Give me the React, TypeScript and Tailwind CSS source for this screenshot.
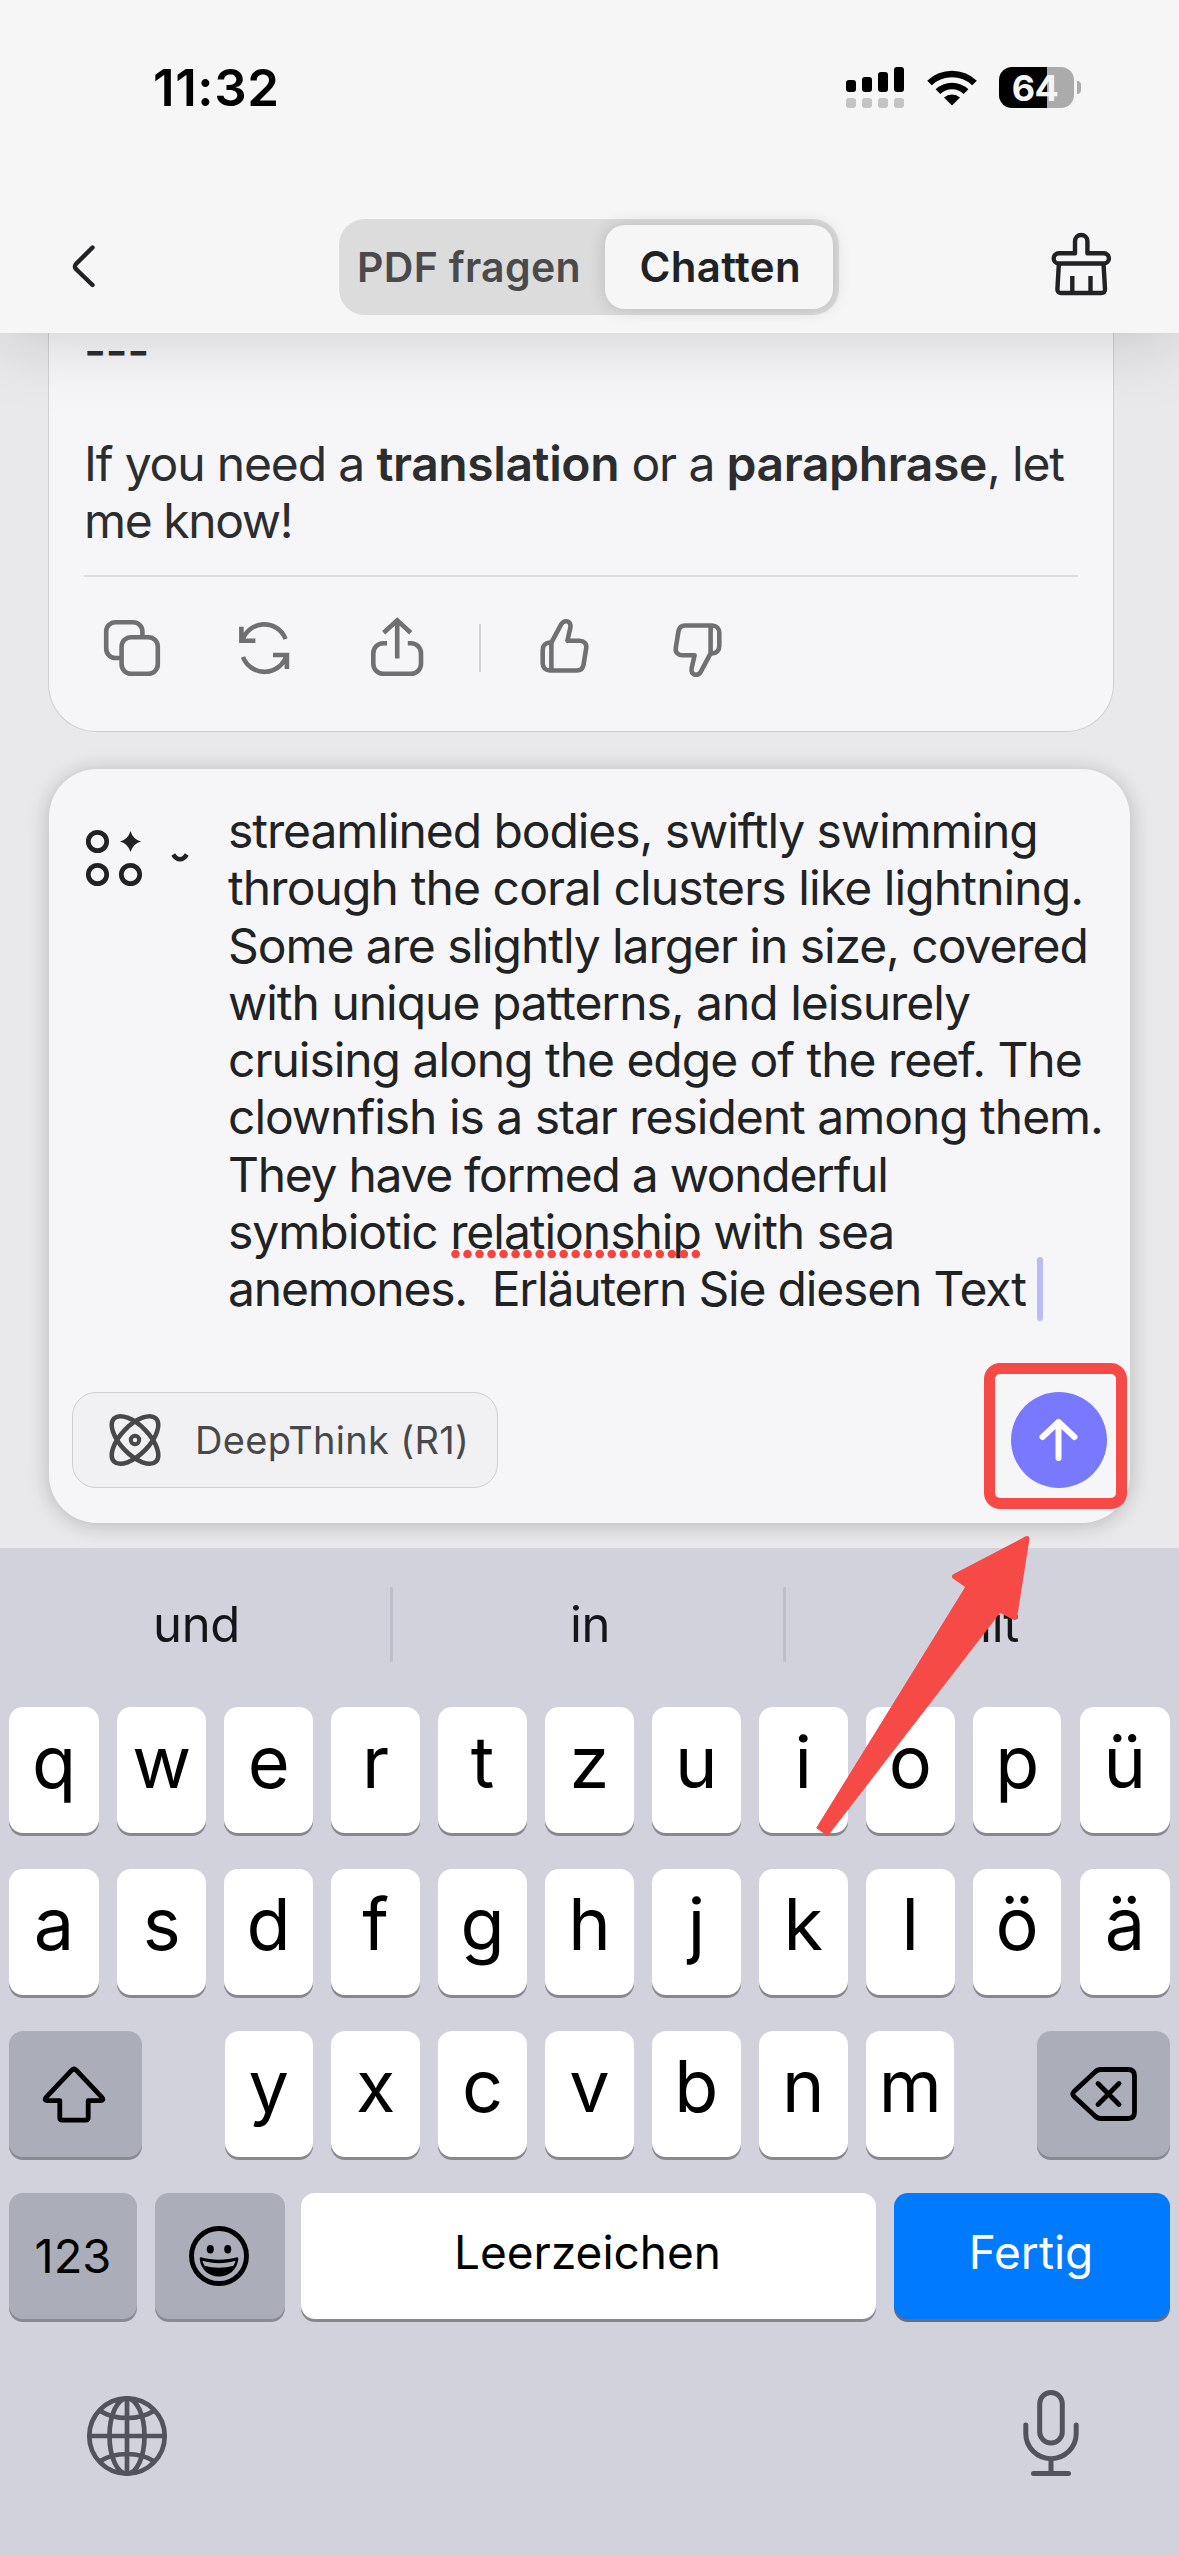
import type { ReactNode } from "react";

const DRAFT_LINES = [
  { text: "streamlined bodies, swiftly swimming", tracking: "tracking-[-1.07px]" },
  { text: "through the coral clusters like lightning.", tracking: "tracking-[-0.9px]" },
  { text: "Some are slightly larger in size, covered", tracking: "tracking-[-1.07px]" },
  { text: "with unique patterns, and leisurely", tracking: "tracking-[-1.02px]" },
  { text: "cruising along the edge of the reef. The", tracking: "tracking-[-1.03px]" },
  { text: "clownfish is a star resident among them.", tracking: "tracking-[-1.03px]" },
  { text: "They have formed a wonderful", tracking: "tracking-[-1.3px]" },
];

const ROW_ONE = ["q", "w", "e", "r", "t", "z", "u", "i", "o", "p", "ü"];
const ROW_TWO = ["a", "s", "d", "f", "g", "h", "j", "k", "l", "ö", "ä"];
const ROW_THREE = ["y", "x", "c", "v", "b", "n", "m"];

function StatusBar() {
  return (
    <div className="flex h-[174px] items-start pl-[153px] pt-[57px] text-black">
      <span className="w-[693px] text-[51px] leading-[62px] font-semibold tracking-[0.6px]">11:32</span>
      <svg className="mt-[10px]" width="58" height="41" viewBox="0 0 58 41">
        <rect x="0" y="13" width="10" height="12" rx="3" />
        <rect x="16" y="10" width="10" height="15" rx="3" />
        <rect x="32" y="5" width="10" height="20" rx="3" />
        <rect x="48" y="0" width="10" height="25" rx="3" />
        <g fill="#c4c4c4">
          <rect x="0" y="31" width="10" height="10" rx="3" />
          <rect x="16" y="31" width="10" height="10" rx="3" />
          <rect x="32" y="31" width="10" height="10" rx="3" />
          <rect x="48" y="31" width="10" height="10" rx="3" />
        </g>
      </svg>
      <svg className="mt-[11px] ml-[22px]" width="52" height="39" viewBox="0 0 52 39">
        <path d="M1.2 12.7a36 36 0 0 1 49.6 0l-4.6 4.5a29.5 29.5 0 0 0-40.4 0z" />
        <path d="M9.6 21.2a24 24 0 0 1 32.8 0l-4.7 4.7a17 17 0 0 0-23.4 0z" />
        <path d="M18 29.6a12 12 0 0 1 16 0L26 37.6z" />
      </svg>
      <div className="mt-[10px] ml-[21px] flex items-center gap-[3px]">
        <div className="flex h-[41px] w-[75px] items-center justify-center rounded-[13px] bg-linear-to-r from-black from-64% to-[#ababab] to-64% text-[36px] leading-none font-bold tracking-[-0.5px] text-[#f5f5f5]">
          <span className="-ml-[3px]">64</span>
        </div>
        <div className="h-[13px] w-[4px] rounded-r-full bg-[#ababab]" />
      </div>
    </div>
  );
}

function Header() {
  return (
    <header className="relative z-10 h-[333px] shrink-0 bg-[#f6f6f6] shadow-[0_4px_70px_rgba(0,0,0,0.17)]">
      <StatusBar />
      <div className="flex h-[159px] items-start pt-[45px]">
        <svg className="mt-[24px] ml-[70px]" width="28" height="48" viewBox="0 0 28 48" fill="none" stroke="#212224" strokeWidth="4.4" strokeLinecap="round" strokeLinejoin="round">
          <path d="M22.5 4.5L6.2 20.8q-2.7 2.7 0 5.4L22.5 42" />
        </svg>
        <div className="ml-[241px] flex h-[96px] w-[500px] rounded-[26px] bg-[#dcdcdc] p-[6px]">
          <div className="flex w-[261px] items-center pl-[12px] text-[41px] leading-[50px] font-semibold tracking-[0.3px] whitespace-nowrap text-[#4a4a4c]">
            PDF fragen
          </div>
          <div className="flex h-[84px] w-[228px] items-center justify-center rounded-[20px] bg-[#f6f6f6] pl-[2px] text-[42px] leading-[50px] font-semibold tracking-[0.3px] text-[#212224] shadow-[0_0_18px_rgba(0,0,0,0.16)]">
            Chatten
          </div>
        </div>
        <svg className="mt-[12px] ml-[211px]" width="64" height="68" viewBox="0 0 64 68" fill="none" stroke="#212224" strokeWidth="4.4" strokeLinejoin="round">
          <path d="M25 22.3V10.2a6.2 6.2 0 0 1 12.4 0v12.1h16.4a5 5 0 0 1 0 10.2H8.8a5 5 0 0 1 0-10.2z" />
          <path d="M8.9 32.5L7.4 58q-.3 4 3.8 4h40q4.1 0 3.8-4l-1.5-25.5" />
          <path d="M22.3 45v17M40.5 45v17" />
        </svg>
      </div>
    </header>
  );
}

const THUMB =
  "M14.4 26.6L24 8.7C25.5 5.8 27.4 5.2 29 5.2c3.5 0 5.2 3 4.3 6.8L30.4 24.7H42.5c4.5 0 7.4 3 6.7 7.4L46.6 48.3c-.6 3.9-2.9 6.2-6.8 6.2H13c-4.5 0-7.3-2.9-7.3-7.3V34c0-4.5 2.8-7.4 7.3-7.4zM14.4 26.6v27.9";

function Answer() {
  return (
    <section className="ml-[48px] flow-root h-[399px] w-[1066px] rounded-b-[48px] border border-t-0 border-[#cfcfd1] bg-[#f6f6f8] pl-[35px]">
      <div className="-mt-[13px] text-[48px] leading-[57.3px] whitespace-nowrap text-[#2c2d2f]">
        <p className="translate-y-[2px] font-medium tracking-[-0.6px]">---</p>
        <p>&nbsp;</p>
        <p className="tracking-[-1.15px]">
          If you need a <b className="font-semibold tracking-[-0.4px]">translation</b> or a{" "}
          <b className="font-semibold tracking-[-0.4px]">paraphrase</b>, let
        </p>
        <p className="tracking-[-1.4px]">me know!</p>
      </div>
      <div className="mt-[26px] h-[2px] w-[994px] bg-[#dcdcde]" />
      <div className="mt-[39px] flex items-start pl-[18px]">
        <svg width="60" height="62" viewBox="0 0 60 62" fill="none" stroke="#707072" strokeWidth="4.6">
          <rect x="19.6" y="21.2" width="36.2" height="36.6" rx="9.5" />
          <path d="M40.4 20V15.5a9.3 9.3 0 0 0-9.3-9.3H13.5a9.3 9.3 0 0 0-9.3 9.3V32.7A9.3 9.3 0 0 0 13.5 42H18" />
        </svg>
        <svg className="ml-[74px]" width="56" height="62" viewBox="0 0 56 62" fill="none" stroke="#707072" strokeWidth="4.6">
          <path d="M49.6 23A23 23 0 0 0 6 25.3M5.4 10.7v14h14" />
          <path d="M7 41A23 23 0 0 0 50.6 39.2M50.9 53V39H37" />
        </svg>
        <svg className="ml-[76px]" width="58" height="62" viewBox="0 0 58 62" fill="none" stroke="#707072" strokeWidth="4.6">
          <path d="M19 27.2H15.3a10 10 0 0 0-10 10V47.8a10 10 0 0 0 10 10H43a10 10 0 0 0 10-10V37.2a10 10 0 0 0-10-10H39.8" />
          <path d="M29.2 42.5V5M15.7 16.8L29.2 4.3L42.7 16.8" />
        </svg>
        <div className="mt-[8px] ml-[53px] h-[48px] w-[2px] bg-[#d2d2d4]" />
        <svg className="ml-[56px]" width="54" height="61" viewBox="0 0 54 61" fill="none" stroke="#707072" strokeWidth="4.6" strokeLinejoin="round">
          <path d={THUMB} />
        </svg>
        <svg className="mt-[3px] ml-[80px] rotate-180" width="54" height="61" viewBox="0 0 54 61" fill="none" stroke="#707072" strokeWidth="4.6" strokeLinejoin="round">
          <path d={THUMB} />
        </svg>
      </div>
    </section>
  );
}

function Composer() {
  return (
    <section className="mt-[37px] ml-[49px] flex h-[754px] w-[1081px] flex-col rounded-[48px] bg-[#f6f6f8] shadow-[0_2px_22px_rgba(0,0,0,0.22)]">
      <div className="flex h-[623px] pt-[32px]">
        <svg className="mt-[27px] ml-[35px]" width="66" height="62" viewBox="0 0 66 62">
          <g fill="none" stroke="#212224" strokeWidth="4.7">
            <circle cx="13.5" cy="13.5" r="9.2" />
            <circle cx="13.5" cy="46.5" r="9.2" />
            <circle cx="46.5" cy="46.5" r="9.2" />
          </g>
          <path fill="#212224" d="M46.5 3Q48.8 11.2 57 13.5Q48.8 15.8 46.5 24Q44.2 15.8 36 13.5Q44.2 11.2 46.5 3z" />
        </svg>
        <svg className="mt-[48px] ml-[21px]" width="20" height="18" viewBox="0 0 20 18" fill="none" stroke="#212224" strokeWidth="4.4">
          <path d="M2.2 5.5Q5 10.2 9 10.2T15.8 5.5" />
        </svg>
        <div className="mt-px ml-[37px] text-[48px] leading-[57.3px] whitespace-pre text-[#212224]">
          {DRAFT_LINES.map((line) => (
            <p key={line.text} className={line.tracking}>
              {line.text}
            </p>
          ))}
          <p className="tracking-[-1.03px]">
            symbiotic{" "}
            <span className="relative">
              relationship
              <svg className="absolute top-[47px] left-0" width="252" height="10" viewBox="0 0 252 10">
                <path d="M5.5 5H248" stroke="#f7443e" strokeWidth="8.6" strokeLinecap="round" strokeDasharray="0 12.02" />
              </svg>
            </span>{" "}
            with sea
          </p>
          <p className="flex items-center tracking-[-1.18px]">
            anemones.{"  "}Erläutern Sie diesen Text
            <span className="-my-[4px] ml-[11px] h-[64px] w-[6px] shrink-0 rounded-full bg-[#b9bcf6]" />
          </p>
        </div>
      </div>
      <div className="flex items-center justify-between pr-[23px] pl-[23px]">
        <button type="button" className="flex h-[96px] w-[426px] items-center rounded-[24px] border border-[#cfcfd1] bg-[#f1f1f3] pl-[35px] text-[38px] tracking-[0.3px] whitespace-nowrap text-[#48484a]">
          <svg className="mr-[33px] shrink-0" width="54" height="54" viewBox="0 0 54 54" fill="none" stroke="#48484a" strokeWidth="4.5">
            <ellipse cx="27" cy="27" rx="30" ry="14.3" transform="rotate(46 27 27)" />
            <ellipse cx="27" cy="27" rx="30" ry="14.3" transform="rotate(-46 27 27)" />
            <circle cx="27" cy="27" r="4.2" strokeWidth="4" />
          </svg>
          DeepThink (R1)
        </button>
        <button type="button" className="flex size-[96px] items-center justify-center rounded-full bg-[#7879ff]">
          <svg width="46" height="46" viewBox="0 0 46 46" fill="none" stroke="#fff" strokeWidth="6" strokeLinecap="round" strokeLinejoin="round">
            <path d="M22.5 41V5M6.5 20L22.5 5L38.5 20" />
          </svg>
        </button>
      </div>
    </section>
  );
}

function LetterKey({ label }: { label: string }) {
  return (
    <div className="flex h-[126px] w-[88.5px] items-center justify-center rounded-[14px] bg-white pb-[16px] text-[72px] leading-none text-black shadow-[0_3px_0_#88898e]">
      {label}
    </div>
  );
}

function LetterRow({ letters }: { letters: string[] }) {
  return (
    <div className="flex justify-between [&>:first-child]:w-[90px] [&>:last-child]:w-[90px]">
      {letters.map((k) => (
        <LetterKey key={k} label={k} />
      ))}
    </div>
  );
}

function GreyKey({ children, className }: { children: ReactNode; className: string }) {
  return (
    <div className={`flex h-[126px] shrink-0 items-center justify-center rounded-[14px] bg-[#abadb9] shadow-[0_3px_0_#898a92] ${className}`}>
      {children}
    </div>
  );
}

function Keyboard() {
  return (
    <section className="h-[1008px] shrink-0 bg-[#d1d2dc] text-black">
      <div className="mb-[6px] flex h-[153px] items-center text-[49px] tracking-[-0.3px] text-[#141518]">
        <span className="w-[390px] pl-[3px] text-center">und</span>
        <span className="h-[75px] w-[3px] rounded-full bg-[#bdbeca]" />
        <span className="w-[390px] pl-[4px] text-center">in</span>
        <span className="h-[75px] w-[3px] rounded-full bg-[#bdbeca]" />
        <span className="w-[393px] pl-[3px] text-center">mit</span>
      </div>

      <div className="flex flex-col gap-[36px] px-[9px]">
        <LetterRow letters={ROW_ONE} />
        <LetterRow letters={ROW_TWO} />
        <div className="flex justify-between">
          <GreyKey className="w-[133px]">
            <svg className="-ml-[3px]" width="66" height="58" viewBox="0 0 66 58" fill="none" stroke="#000" strokeWidth="4.8" strokeLinejoin="round">
              <path d="M30.8 5.2L4.8 32.7q-1.7 2.8 1.3 3H18.8V52.5q0 2.6 2.6 2.6H44.6q2.6 0 2.6-2.6V35.7H59.9q3-.2 1.3-3L35.2 5.2q-2.2-2.1-4.4 0z" />
            </svg>
          </GreyKey>
          <div className="flex gap-[18.4px]">
            {ROW_THREE.map((k) => (
              <LetterKey key={k} label={k} />
            ))}
          </div>
          <GreyKey className="w-[133px]">
            <svg width="68" height="58" viewBox="0 0 68 58" fill="none" stroke="#000" strokeWidth="4.8" strokeLinejoin="round" strokeLinecap="round">
              <path d="M31 4.5H58q6.5 0 6.5 6.5V47q0 6.5-6.5 6.5H31q-3.5 0-6-2.5L4 31.5q-2.3-2.5 0-5L25 7q2.5-2.5 6-2.5z" />
              <path d="M28 18.5L49 39.5M49 18.5L28 39.5" />
            </svg>
          </GreyKey>
        </div>
        <div className="flex text-[46px]">
          <GreyKey className="w-[128px] text-[47px]">123</GreyKey>
          <GreyKey className="ml-[18px] w-[130px]">
            <svg className="-ml-[2px]" width="60" height="60" viewBox="0 0 60 60">
              <circle cx="30" cy="30" r="27.5" fill="none" stroke="#000" strokeWidth="4.9" />
              <ellipse cx="21.3" cy="23.3" rx="3.5" ry="4.2" />
              <ellipse cx="38.7" cy="23.3" rx="3.5" ry="4.2" />
              <path d="M12 31.3C22 34.5 38 34.5 48 31.3Q49.5 31 49.3 33C48 44 40 50.5 30 50.5S12 44 10.7 33Q10.5 31 12 31.3z" />
              <path fill="#abadb9" d="M13.5 34.7C24 38 36 38 46.5 34.7Q46 37.5 44.5 39.7C36 42.3 24 42.3 15.5 39.7Q14 37.5 13.5 34.7z" />
            </svg>
          </GreyKey>
          <div className="ml-[16px] flex h-[126px] w-[575px] items-center justify-center rounded-[14px] bg-white pr-[2px] pb-[8px] shadow-[0_3px_0_#88898e]">
            Leerzeichen
          </div>
          <div className="ml-[18px] flex h-[126px] w-[276px] items-center justify-center rounded-[14px] bg-[#007aff] pr-[2px] pb-[8px] text-white shadow-[0_3px_0_#6b6e78]">
            Fertig
          </div>
        </div>
      </div>

      <div className="mt-[70px] flex justify-between pr-[98px] pl-[86px]">
        <svg className="mt-[6px]" width="82" height="82" viewBox="0 0 82 82" fill="none" stroke="#51545c" strokeWidth="4.7">
          <circle cx="41" cy="41" r="37.7" />
          <ellipse cx="41" cy="41" rx="17.5" ry="37.7" />
          <path d="M41 3.3v75.4M3.3 41h75.4M13.5 15.5Q25 23 41 23T68.5 15.5M13.5 66.5Q25 59 41 59T68.5 66.5" />
        </svg>
        <svg width="60" height="88" viewBox="0 0 60 88" fill="none" stroke="#51545c" strokeWidth="5" strokeLinecap="round">
          <rect x="18.7" y="3.5" width="22.6" height="50.5" rx="11.3" />
          <path d="M4.8 36v8.5a25.2 25.2 0 0 0 50.4 0V36M30 70v14.5M12.5 84.5h35" />
        </svg>
      </div>
    </section>
  );
}

export default function App() {
  return (
    <div className="relative flex h-[2556px] w-[1179px] flex-col overflow-hidden bg-[#e9e9eb] font-['Inter',sans-serif]">
      <Header />
      <main className="h-[1215px] shrink-0">
        <Answer />
        <Composer />
      </main>
      <Keyboard />

      {/* highlight around the send button */}
      <div className="absolute top-[1363px] left-[984px] z-20 h-[146px] w-[143px] rounded-[16px] border-[11px] border-[#f64a47]" />
      <svg className="absolute top-[1530px] left-[810px] z-20" width="226" height="312" viewBox="0 0 226 312" fill="#f64a47" stroke="#f64a47" strokeLinejoin="round">
        <path strokeWidth="5" d="M217 8.5L144.5 46.5L160 57.5L188 79L204.5 87.5z" />
        <path d="M156 56.5L6.7 298L17.7 305.5L191 81z" />
      </svg>
    </div>
  );
}
